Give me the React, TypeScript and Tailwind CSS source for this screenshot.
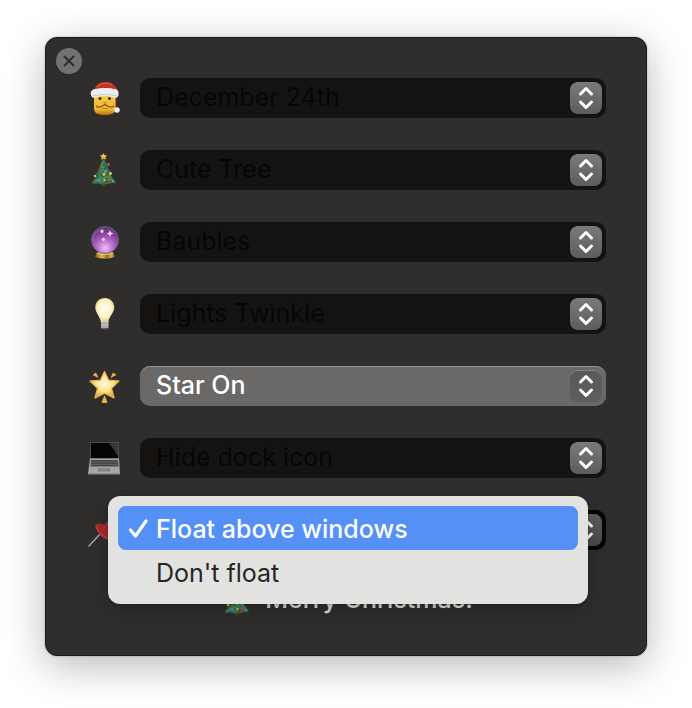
import { useState } from 'react';
import type { ReactNode } from 'react';

function SantaIcon() {
  return (
    <svg viewBox="0 0 32 36" className="h-9 w-8 shrink-0" aria-hidden="true">
      <defs>
        <linearGradient id="santa-face" x1="0" y1="0" x2="0" y2="1">
          <stop offset="0" stopColor="#f6cf4c" />
          <stop offset="0.75" stopColor="#efb432" />
          <stop offset="1" stopColor="#b86a14" />
        </linearGradient>
      </defs>
      <path d="M27 15l2 1-.5 12-2-1z" fill="#7a2a1c" />
      <path d="M6 14h21.500v14c0 5-3 7-10.700 7S6 33 6 28z" fill="url(#santa-face)" />
      <path d="M6 11C7 5 11 2 18 2c7 0 11 4 12 11L17 10z" fill="#c5301f" />
      <path d="M9 7c3-4 11-5 15-2" fill="none" stroke="#e2654c" strokeWidth="1" />
      <path d="M3 15c-1-3 1-5.500 4-6 5-1.500 15-1.500 20 0 3 .5 4 3 3.500 6-.5 3-4 3.500-6 2-5-1.500-10-1.500-15 0-3 1.500-6 1-6.500-2z" fill="#eeeef0" />
      <path d="M5 15.500c3 .5 5-1 11.500-1s9 1.500 12 1" fill="none" stroke="#c6c7cc" strokeWidth="1" />
      <circle cx="12" cy="18.500" r="1.500" fill="#3a230b" />
      <circle cx="21.500" cy="18.500" r="1.500" fill="#3a230b" />
      <path d="M15.500 22.500q1.500 1 3 0" fill="none" stroke="#a8701b" strokeWidth="1" />
      <path d="M8.500 26c1 2 4 1.500 8.500-1.500 4 3 7 3.500 8.500 1.500" fill="none" stroke="#8a4c10" strokeWidth="1.200" strokeLinecap="round" />
      <path d="M14.500 28.500h5" stroke="#b87419" strokeWidth="1" />
      <circle cx="29" cy="30" r="2.700" fill="#f1f1f3" />
    </svg>
  );
}

function TreeIcon() {
  return (
    <svg viewBox="0 0 32 36" className="h-9 w-8 shrink-0" aria-hidden="true">
      <path d="M13 29h5v5q-2 1.500-4.500 0z" fill="#5b3116" />
      <path d="M15.500 6l5 8-1.500.5 4.500 7-1.500.5 6 8.500c-3 1.500-5 .5-6 1-3 1-9 1.500-12 0-2 .5-5 .5-6.500-.5l6-8-2-.5 5-7-1.500-.5z" fill="#34714a" />
      <path d="M15 9l-2 7 5-2-7 9 9-4-12 10 13-5M21 22l4 8M12 27l-6 3M17 27l-4 4" fill="none" stroke="#5c9b67" strokeWidth="1" />
      <path d="M18 13l-2 6 5 1M12 21l3 4M21 26l-3 4" fill="none" stroke="#1d4e31" strokeWidth="1" />
      <path d="M15.500 1l1.200 2.200 2.500.3-1.800 1.700.5 2.500-2.400-1.200-2.400 1.200.5-2.500-1.800-1.700 2.500-.3z" fill="#f3c233" />
      <circle cx="20.500" cy="12.500" r="1.400" fill="#d9405a" />
      <circle cx="11.500" cy="17.500" r="1.100" fill="#d94437" />
      <circle cx="17.500" cy="19" r="1.600" fill="#5594df" />
      <circle cx="22.500" cy="21.500" r="1.400" fill="#e6cb4f" />
      <circle cx="16" cy="22.500" r="1.300" fill="#efc63c" />
      <circle cx="7" cy="24" r="1.300" fill="#d7b546" />
      <circle cx="21" cy="27.500" r="1.600" fill="#e0475c" />
      <circle cx="11.500" cy="28.500" r="1.500" fill="#4a83cb" />
      <circle cx="16.500" cy="28" r="1.200" fill="#ddb749" />
      <circle cx="25" cy="29" r="1.100" fill="#579de0" />
    </svg>
  );
}

function CrystalBallIcon() {
  return (
    <svg viewBox="0 0 32 36" className="h-9 w-8 shrink-0" aria-hidden="true">
      <defs>
        <radialGradient id="crystal" cx="0.500" cy="0.800" r="0.800">
          <stop offset="0" stopColor="#efc0f1" />
          <stop offset="0.400" stopColor="#b869ca" />
          <stop offset="0.750" stopColor="#7d3b93" />
          <stop offset="1" stopColor="#54396f" />
        </radialGradient>
        <linearGradient id="crystal-base">
          <stop offset="0" stopColor="#8d5b19" />
          <stop offset="0.350" stopColor="#e6bb4f" />
          <stop offset="0.600" stopColor="#9c681d" />
          <stop offset="0.800" stopColor="#dfb34a" />
          <stop offset="1" stopColor="#80521a" />
        </linearGradient>
      </defs>
      <path d="M9 28h16l2 5q-10 3.500-20 0z" fill="url(#crystal-base)" />
      <circle cx="17" cy="16" r="13.500" fill="url(#crystal)" stroke="#69618c" strokeWidth="1" />
      <path d="M9 29.500q8 2 16 0" fill="none" stroke="#f0cb6a" strokeWidth="1" />
      <path d="M5 17c0-7 5-12 11-12" fill="none" stroke="#8e70a8" strokeWidth="1" />
      <circle cx="14" cy="7.500" r="1.400" fill="#fbeefc" />
      <circle cx="15.500" cy="15.500" r="1.400" fill="#f5d5f5" />
      <path d="M22 6l1 2.500 2.500 1-2.500 1-1 2.500-1-2.500-2.500-1 2.500-1z" fill="#f7dff8" />
    </svg>
  );
}

function BulbIcon() {
  return (
    <svg viewBox="0 0 32 36" className="h-9 w-8 shrink-0" aria-hidden="true">
      <defs>
        <radialGradient id="bulb" cx="0.500" cy="0.450" r="0.600">
          <stop offset="0" stopColor="#fffdf0" />
          <stop offset="0.600" stopColor="#fdf2c6" />
          <stop offset="1" stopColor="#e2c06a" />
        </radialGradient>
      </defs>
      <path d="M16.800 2c5.400 0 9.500 4 9.500 9.500 0 5-5 8.500-6 14.500h-7.500c-1-6-5.500-9.500-5.500-14.500C7.300 6 11.400 2 16.800 2z" fill="url(#bulb)" />
      <path d="M13 25h7.500v6c-1 3-6.500 3-7.500 0z" fill="#c4c4c2" />
      <path d="M13 27.500h7.500M13 30h7.500" stroke="#92928f" strokeWidth="0.800" />
      <path d="M14.500 32.500h4.500" stroke="#5b5b59" strokeWidth="1.500" />
    </svg>
  );
}

function StarIcon() {
  return (
    <svg viewBox="0 0 32 36" className="h-9 w-8 shrink-0" aria-hidden="true">
      <defs>
        <radialGradient id="star" cx="0.500" cy="0.450" r="0.550">
          <stop offset="0" stopColor="#fffadb" />
          <stop offset="0.550" stopColor="#fce287" />
          <stop offset="1" stopColor="#e09c35" />
        </radialGradient>
      </defs>
      <path d="M16.500 3.500l4.200 8.700 10.300.8-7.500 7.300 2.600 9.700-9.600-4.700L7 30l2.500-9.700L2 13l10.300-.8z" fill="url(#star)" stroke="#efb94f" strokeWidth="1.200" strokeLinejoin="round" />
      <path d="M4.500 7l3.500-2.500 2.500 5.500zM28.500 7L25 4.500 22.500 10zM16.500 27l3 7.500q-3 1.200-6 0z" fill="#e9b440" />
    </svg>
  );
}

function LaptopIcon() {
  return (
    <svg viewBox="0 0 32 36" className="h-9 w-8 shrink-0" aria-hidden="true">
      <path d="M3 2h27q1 0 1 1v16H2V3q0-1 1-1z" fill="#4b4b4b" />
      <path d="M3 3h27v15H3z" fill="#050505" />
      <path d="M21 3h9v13z" fill="#34373a" />
      <path d="M2 18.500h29L32 34H0z" fill="#a5a5a5" />
      <path d="M3 20h27l.5 6.500h-28z" fill="#484848" />
      <path d="M3 22h27M3 24.500h27" stroke="#777" strokeWidth="0.500" />
      <path d="M9.500 27.500h13l.5 4.500H9z" fill="#858585" stroke="#bdbdbd" strokeWidth="0.500" />
      <path d="M0 33.500h32v1.200H0z" fill="#727272" />
    </svg>
  );
}

function PinIcon() {
  return (
    <svg viewBox="0 0 32 36" className="h-9 w-8 shrink-0" aria-hidden="true">
      <path d="M1 34l12-13" stroke="#9aa7b3" strokeWidth="1.500" strokeLinecap="round" />
      <path d="M7 14c1-3 5-3 9-1l9-9 6 6-9 10c2 4 0 8-3 8-5-2-10-7-12-14z" fill="#a92b2c" />
      <path d="M8 14c2 5 6 10 11 12" fill="none" stroke="#c44847" strokeWidth="1" />
    </svg>
  );
}

type Setting = {
  id: string;
  label: string;
  icon: ReactNode;
  options: string[];
  variant?: 'active' | 'open';
};

const SETTINGS: Setting[] = [
  { id: 'date', label: 'Date', icon: <SantaIcon />, options: ['December 24th', 'December 25th'] },
  { id: 'tree', label: 'Tree', icon: <TreeIcon />, options: ['Cute Tree'] },
  { id: 'decoration', label: 'Decoration', icon: <CrystalBallIcon />, options: ['Baubles', 'No Baubles'] },
  { id: 'lights', label: 'Lights', icon: <BulbIcon />, options: ['Lights Twinkle', 'Lights Off'] },
  { id: 'star', label: 'Star', icon: <StarIcon />, options: ['Star On', 'Star Off'], variant: 'active' },
  { id: 'dock', label: 'Dock icon', icon: <LaptopIcon />, options: ['Hide dock icon', 'Show dock icon'] },
  { id: 'float', label: 'Window level', icon: <PinIcon />, options: ['Float above windows', "Don't float"], variant: 'open' },
];

// the open select hides its own text, the menu on top shows it
const SELECT_STYLES = {
  default: 'bg-[#141311] text-[#060606]',
  active: 'bg-[#6a6967] text-white font-medium shadow-[inset_0_1px_0_#93928f]',
  open: 'bg-[#060606] text-transparent',
};

const STEPPER_STYLES = {
  default: 'bg-linear-to-b from-[#7a7a79] to-[#5d5d5c]',
  active: 'bg-linear-to-b from-[#595958] to-[#5e5e5d] shadow-[inset_0_1px_0_#858583]',
  open: 'bg-linear-to-b from-[#5f5f5e] to-[#494948]',
};

function FloatMenu({ options }: { options: string[] }) {
  const [selected, setSelected] = useState(0);

  return (
    <div
      role="listbox"
      aria-label="Window level"
      className="absolute -top-[14px] right-[18px] -left-8 z-10 rounded-xl bg-[#e2e2e0] p-[10px] shadow-[0_0_1px_#000,0_6px_20px_rgba(0,0,0,0.25)]"
    >
      {options.map((option, i) => (
        <button
          key={option}
          type="button"
          role="option"
          aria-selected={selected === i}
          onClick={() => setSelected(i)}
          className={`flex h-11 w-full items-center rounded-lg pt-[2px] pl-[10px] text-left ${
            selected === i ? 'bg-[#5490f5] font-medium text-white' : 'text-[#262626]'
          }`}
        >
          <span className="w-7 shrink-0">
            {selected === i && (
              <svg viewBox="0 0 20 20" className="size-5" fill="none" stroke="currentColor" strokeWidth="3.200" strokeLinecap="round" strokeLinejoin="round" aria-hidden="true">
                <path d="M2.500 11l5 6L18 2" />
              </svg>
            )}
          </span>
          {option}
        </button>
      ))}
    </div>
  );
}

function SettingRow({ setting }: { setting: Setting }) {
  const variant = setting.variant ?? 'default';

  return (
    <div className="flex items-center gap-5">
      <label htmlFor={setting.id} className="shrink-0">
        {setting.icon}
      </label>
      <div className="relative min-w-0 flex-1">
        <select
          id={setting.id}
          aria-label={setting.label}
          className={`block h-10 w-full appearance-none rounded-[10px] pr-12 pb-[2px] pl-4 outline-none ${SELECT_STYLES[variant]}`}
        >
          {setting.options.map((option) => (
            <option key={option}>{option}</option>
          ))}
        </select>
        <span
          className={`pointer-events-none absolute top-1 right-1 flex size-8 items-center justify-center rounded-lg ${STEPPER_STYLES[variant]}`}
        >
          <svg viewBox="0 0 32 32" className="size-8" fill="none" stroke="white" strokeWidth="3" strokeLinecap="round" strokeLinejoin="round" aria-hidden="true">
            <path d="M10.500 12L16 6.500l5.500 5.500M10.500 20l5.500 5.500 5.500-5.500" />
          </svg>
        </span>
        {variant === 'open' && <FloatMenu options={setting.options} />}
      </div>
    </div>
  );
}

export default function App() {
  return (
    <main className="min-h-screen bg-white px-[45px] pt-[37px] pb-12 font-['Inter','Liberation_Sans',sans-serif] text-[25px] leading-8">
      <section className="relative rounded-xl border border-[#1d1c1b] bg-[#2f2e2c] pt-10 pr-10 pb-[38px] pl-[42px] shadow-[0_0_2px_rgba(0,0,0,0.3),0_10px_40px_rgba(0,0,0,0.28)]">
        <button
          type="button"
          aria-label="Close"
          className="absolute top-[10px] left-[10px] flex size-[26px] items-center justify-center rounded-full bg-[#737271] text-[#2f2e2c]"
        >
          <svg viewBox="0 0 12 12" className="size-3" fill="none" stroke="currentColor" strokeWidth="2" strokeLinecap="round" aria-hidden="true">
            <path d="M1.500 1.500l9 9M10.500 1.500l-9 9" />
          </svg>
        </button>

        <div className="flex flex-col gap-8">
          {SETTINGS.map((setting) => (
            <SettingRow key={setting.id} setting={setting} />
          ))}
        </div>

        <p className="mt-[31px] flex items-center justify-center gap-3 font-medium text-[#dededc]">
          <TreeIcon />
          Merry Christmas!
        </p>
      </section>
    </main>
  );
}
